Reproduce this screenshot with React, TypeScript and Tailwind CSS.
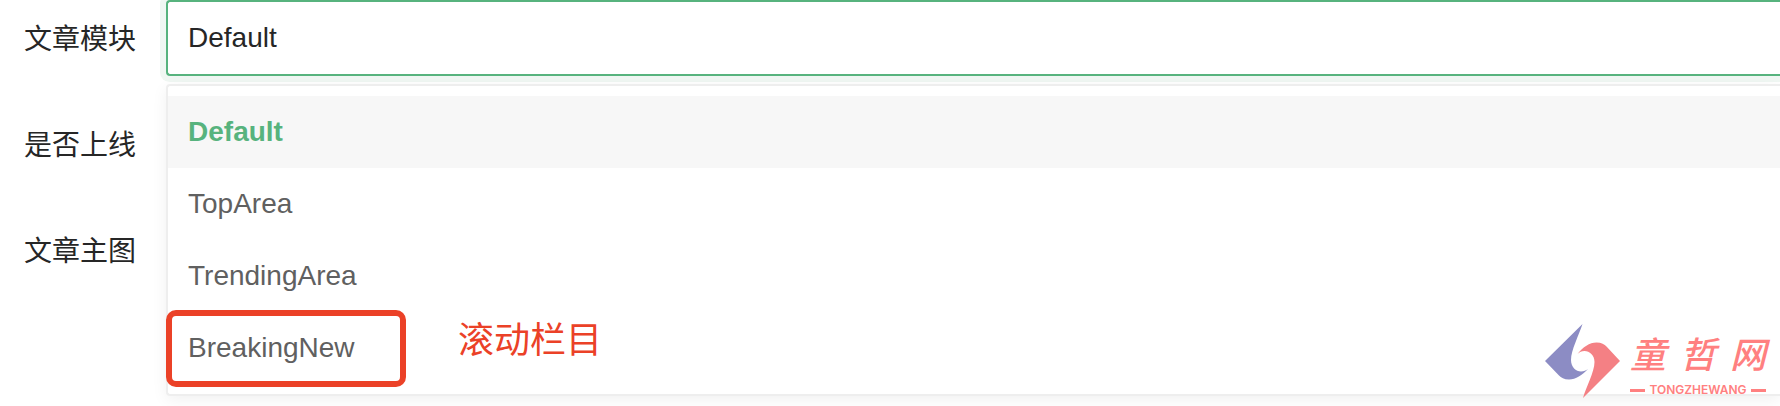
import { useState } from "react";

const modules = ["Default", "TopArea", "TrendingArea", "BreakingNew"];

function Logo() {
  return (
    <svg viewBox="0 0 76 76" className="h-[76px] w-[76px] shrink-0" aria-hidden="true">
      <path
        d="M37.5 0C34 11 26 26 26 36C26 43 31 47.500 36 47.500C39 47.500 41 46.500 43 45C37 51 31 55.500 24 55.500C19 55.500 16 53.500 14 51.500L0 37Z"
        fill="#8c8cc4"
      />
      <path
        d="M38 74C41 63 49.500 48 49.500 38C49.500 31 44.500 27 39.500 27C36.500 27 34.500 28 32.500 30C38 23 44.500 18.500 51.500 18.500C56.500 18.500 59.500 20.500 61.500 22.500L75 37Z"
        fill="#f48084"
      />
    </svg>
  );
}

function Watermark() {
  return (
    <div className="pointer-events-none absolute right-3.5 bottom-1.5 z-20 flex items-start gap-[9px] text-[#ff8080]">
      <Logo />
      <div className="flex w-[136px] flex-col">
        <div className="flex h-14 items-center justify-between font-['Noto_Sans_CJK_SC',sans-serif] text-[36px] leading-none font-medium italic">
          <span>童</span>
          <span>哲</span>
          <span>网</span>
        </div>
        <div className="flex h-5 items-center gap-1 font-[Inter,sans-serif] text-xs leading-5 font-semibold">
          <span className="h-[3px] flex-1 bg-[#ff8080]" />
          TONGZHEWANG
          <span className="h-[3px] flex-1 bg-[#ff8080]" />
        </div>
      </div>
    </div>
  );
}

export default function App() {
  const [value, setValue] = useState("Default");

  return (
    <main className="relative min-h-screen overflow-hidden bg-white font-['Liberation_Sans','Noto_Sans_CJK_SC',sans-serif] text-[28px] text-[#262626]">
      <form className="flex flex-col gap-[30px] pl-6">
        <div className="flex h-[76px] items-center gap-[30px]">
          <label htmlFor="module" className="shrink-0 pt-1">
            文章模块
          </label>
          <div className="relative h-full flex-1">
            <select
              id="module"
              value={value}
              onChange={(event) => setValue(event.target.value)}
              className="h-full w-full appearance-none rounded-l border-2 border-r-0 border-[#57b37e] bg-white px-5 shadow-[0_0_0_6px_#f0f7f3] outline-none"
            >
              {modules.map((item) => (
                <option key={item}>{item}</option>
              ))}
            </select>
            <ul className="absolute top-full right-0 left-0 z-10 mt-2 rounded-l border-2 border-r-0 border-[#eeeeee] bg-white py-2.5 shadow-[0_4px_16px_rgba(0,0,0,0.06)]">
              {modules.map((item) => (
                <li key={item} className="relative">
                  <button
                    type="button"
                    onClick={() => setValue(item)}
                    className={`block h-[72px] w-full px-5 text-left ${
                      item === value ? "bg-[#f7f7f7] font-bold text-[#57b37e]" : "text-[#606060]"
                    }`}
                  >
                    {item}
                  </button>
                  {item === "BreakingNew" && (
                    <div className="pointer-events-none absolute -top-0.5 -left-0.5 flex gap-[52px] text-[#eb4127]">
                      <span className="h-[77px] w-60 rounded-[10px] border-6 border-[#eb4127]" />
                      <span className="text-[36px] leading-[62px]">滚动栏目</span>
                    </div>
                  )}
                </li>
              ))}
            </ul>
          </div>
        </div>
        <div className="flex h-[76px] items-center pt-1">是否上线</div>
        <div className="flex h-[76px] items-center pt-1">文章主图</div>
      </form>
      <Watermark />
    </main>
  );
}
